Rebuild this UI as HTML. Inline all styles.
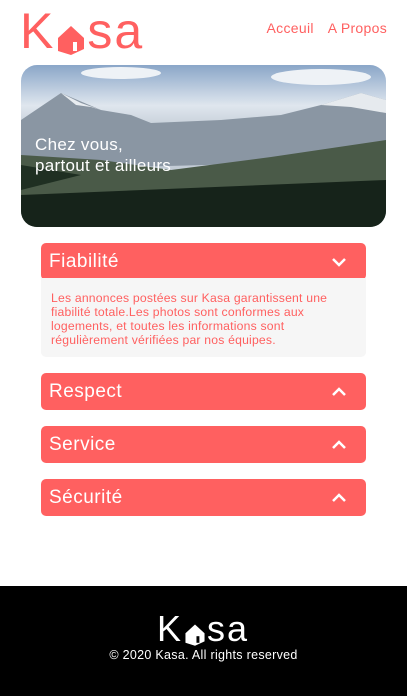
<!DOCTYPE html>
<html><head><meta charset="utf-8"><style>
*{margin:0;padding:0;box-sizing:border-box}
body{width:407px;height:696px;background:#fff;font-family:"Liberation Sans",sans-serif;position:relative;overflow:hidden}
.logo{position:absolute;display:flex;align-items:flex-end;color:#FF6060;font-size:50px;line-height:1;letter-spacing:2px}
.nav{position:absolute;top:20px;right:20px;color:#FF6060;font-size:14px;letter-spacing:0.3px}
.nav span{margin-left:14px}
.banner{position:absolute;left:21px;top:65px;width:365px;height:162px;border-radius:16px;overflow:hidden;
background:linear-gradient(180deg,#8aa6c8 0%,#dfe6ee 25%,#c3ccd6 40%)}
.banner .t{position:absolute;left:14px;top:69px;color:#fff;font-size:17px;line-height:21px;letter-spacing:0.3px}
.acc{position:absolute;left:41px;width:325px;height:37px;background:#FF6060;border-radius:5px;color:#fff;font-size:19px;line-height:37px;padding-left:8px;letter-spacing:0.5px}
.acc svg{position:absolute;right:19px;top:14px}
.content{position:absolute;left:41px;top:278px;width:325px;height:79px;background:#f6f6f6;border-radius:0 0 5px 5px;color:#FF6060;font-size:12.2px;line-height:14px;padding:13px 10px;letter-spacing:0.2px}
footer{position:absolute;left:0;top:586px;width:407px;height:110px;background:#000;color:#fff;text-align:center}
</style></head><body>
<div class="logo" style="left:20px;top:6px">K<svg width="30" height="32" viewBox="0 0 30 32" style="margin:0 1px 1px 1px"><path d="M2 15 L15 3 L28 15 L28 26 L15 32 L2 28 Z" fill="#FF6060"/><rect x="17" y="19" width="4" height="9" fill="#fff"/></svg>sa</div>
<div class="nav"><span>Acceuil</span><span>A Propos</span></div>
<div class="banner">
<svg width="365" height="162" style="position:absolute;left:0;top:0">
<ellipse cx="100" cy="8" rx="40" ry="6" fill="#eef2f6"/><ellipse cx="300" cy="12" rx="50" ry="8" fill="#eef2f6"/>
<polygon points="0,55 40,28 80,45 110,50 130,58 200,55 260,50 300,40 340,28 365,35 365,95 0,105" fill="#8a96a3"/>
<polygon points="40,28 55,40 70,42 80,45 60,38" fill="#e8ecf0"/><polygon points="300,40 340,28 365,35 365,48 330,42" fill="#e6eaee"/>
<polygon points="0,90 80,95 150,105 250,92 365,75 365,162 0,162" fill="#4a5a48"/>
<polygon points="0,130 365,115 365,162 0,162" fill="#16231a"/>
<polygon points="0,100 60,110 0,125" fill="#1f2f22"/></svg>
<div class="t">Chez vous,<br>partout et ailleurs</div></div>
<div class="acc" style="top:243px">Fiabilité<svg width="16" height="10"><path d="M2 2 L8 8 L14 2" stroke="#fff" stroke-width="2.5" fill="none"/></svg></div>
<div class="content">Les annonces postées sur Kasa garantissent une fiabilité totale.Les photos sont conformes aux logements, et toutes les informations sont régulièrement vérifiées par nos équipes.</div>
<div class="acc" style="top:373px">Respect<svg width="16" height="10"><path d="M2 8 L8 2 L14 8" stroke="#fff" stroke-width="2.5" fill="none"/></svg></div>
<div class="acc" style="top:426px">Service<svg width="16" height="10"><path d="M2 8 L8 2 L14 8" stroke="#fff" stroke-width="2.5" fill="none"/></svg></div>
<div class="acc" style="top:479px">Sécurité<svg width="16" height="10"><path d="M2 8 L8 2 L14 8" stroke="#fff" stroke-width="2.5" fill="none"/></svg></div>
<footer>
<div class="logo" style="left:157px;top:25px;color:#fff;font-size:36px">K<svg width="22" height="24" viewBox="0 0 30 32" style="margin:0 1px 1px"><path d="M2 15 L15 3 L28 15 L28 26 L15 32 L2 28 Z" fill="#fff"/><rect x="17" y="19" width="4" height="9" fill="#000"/></svg>sa</div>
<div style="position:absolute;top:62px;width:100%;font-size:12.5px;letter-spacing:0.3px">© 2020 Kasa. All rights reserved</div>
</footer>
</body></html>
